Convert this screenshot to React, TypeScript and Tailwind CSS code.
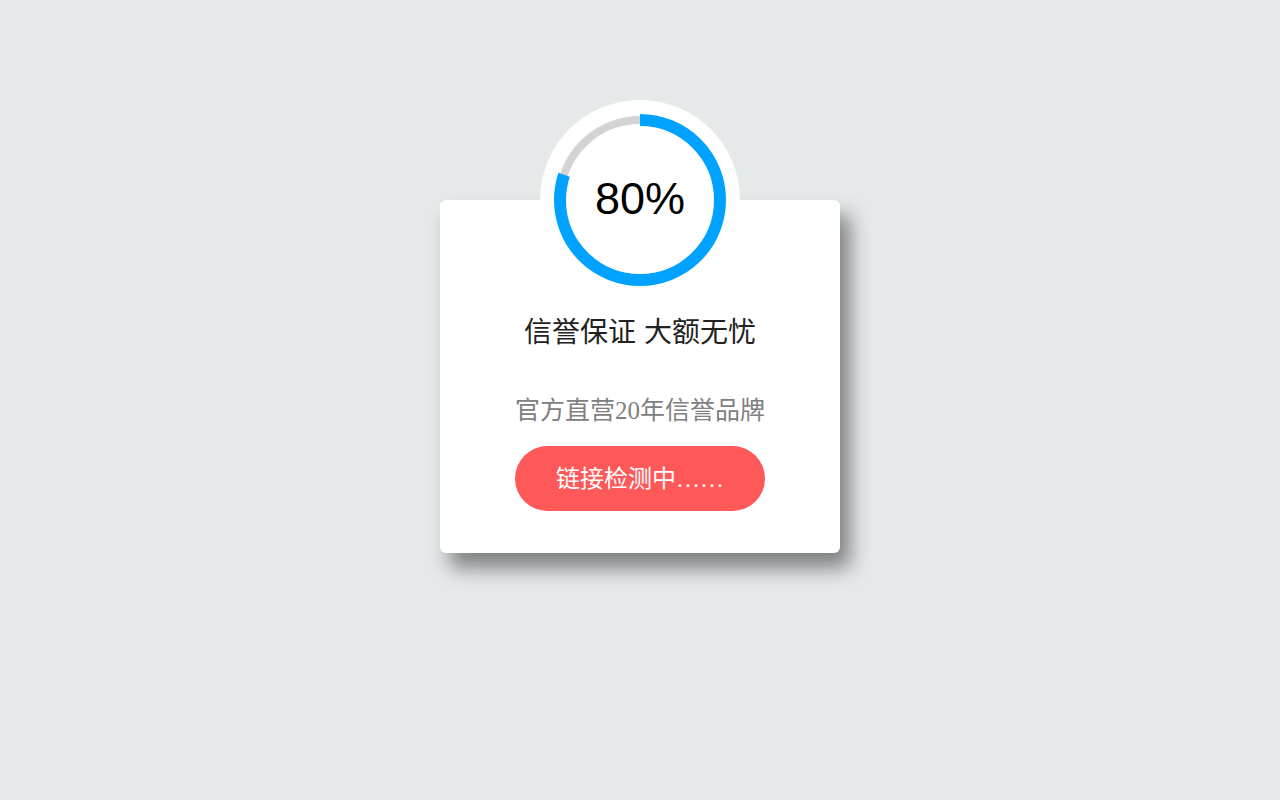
import React from 'react';

const R = 80;
const C = 2 * Math.PI * R;

function Ring({ percent }: { percent: number }) {
  return (
    <div className="relative mx-auto -mt-[100px] h-[200px] w-[200px] rounded-full bg-white">
      <svg width="200" height="200" viewBox="0 0 200 200" className="absolute inset-0">
        <circle cx="100" cy="100" r={R} fill="none" stroke="#d3d3d3" strokeWidth="8" />
        <circle
          cx="100"
          cy="100"
          r={R}
          fill="none"
          stroke="#00a2ff"
          strokeWidth="12"
          strokeDasharray={`${C * percent} ${C}`}
          transform="rotate(-90 100 100)"
        />
      </svg>
      <div className="absolute inset-0 flex items-center justify-center pb-[2px] font-['Liberation_Sans',sans-serif] text-[45px] text-black">
        {Math.round(percent * 100)}%
      </div>
    </div>
  );
}

export default function App() {
  return (
    <div className="min-h-screen bg-[#e5e9ea] pt-[200px]">
      <div className="relative mx-auto flex w-[400px] flex-col rounded-md bg-white pb-[42px] shadow-[10px_15px_20px_rgba(0,0,0,0.45)]">
        <Ring percent={0.8} />
        <h1 className="mt-[12px] text-center font-['Liberation_Sans','Noto_Sans_CJK_SC',sans-serif] text-[28px] leading-[42px] text-[#222]">
          信誉保证 大额无忧
        </h1>
        <p className="mt-[39px] text-center font-['Liberation_Serif','Noto_Sans_CJK_SC',serif] text-[25px] leading-[36px] text-[#808080]">
          官方直营20年信誉品牌
        </p>
        <div className="mt-[17px] flex justify-center">
          <button className="h-[65px] w-[250px] rounded-full bg-[#ff5858] font-['Liberation_Serif','Noto_Sans_CJK_SC',serif] text-[24px] text-white">
            链接检测中……
          </button>
        </div>
      </div>
    </div>
  );
}
